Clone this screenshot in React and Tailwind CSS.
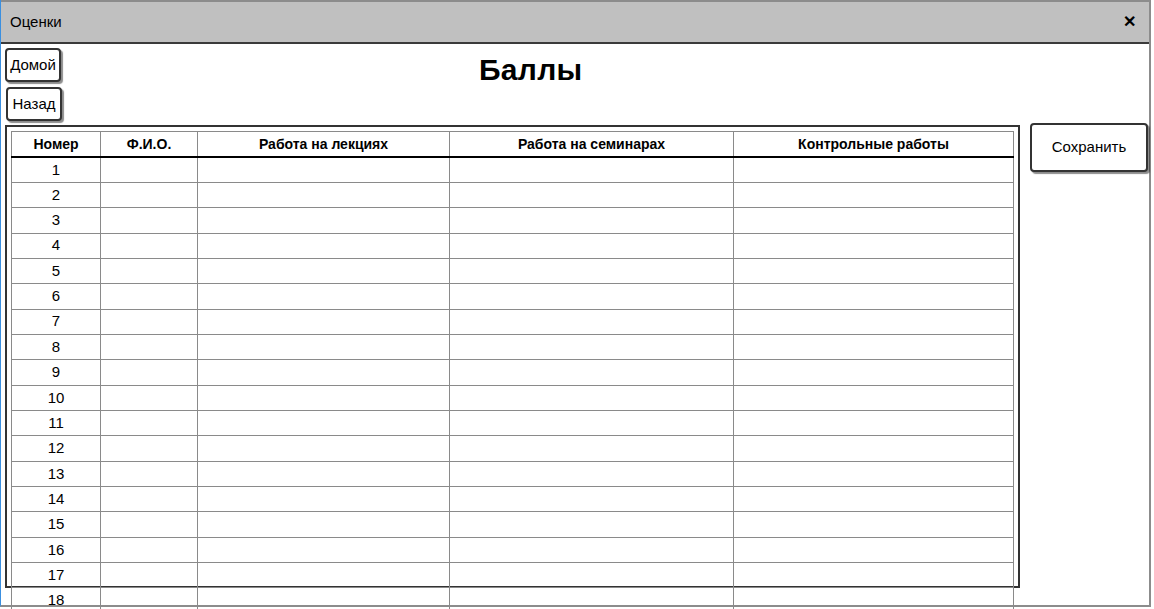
import React from "react";

const columns = [
  { title: "Номер", width: "w-[89px]" },
  { title: "Ф.И.О.", width: "w-[97px]" },
  { title: "Работа на лекциях", width: "w-[252px]" },
  { title: "Работа на семинарах", width: "w-[284px]" },
  { title: "Контрольные работы", width: "w-[280px]" },
];

const rows = Array.from({ length: 18 }, (_, i) => i + 1);

function SketchButton({ children, className = "" }) {
  return (
    <button
      type="button"
      className={
        "border-2 border-[#333] rounded-[4px] bg-white text-black shadow-[2px_2px_1px_rgba(0,0,0,0.45)] flex items-center justify-center " +
        className
      }
    >
      {children}
    </button>
  );
}

export default function App() {
  return (
    <div className="w-[1154px] h-[609px] bg-white overflow-hidden text-black font-['Liberation_Sans',sans-serif]">
      <div className="w-[1151px] h-[607px] border-l border-l-[#3a8fe0] border-r-2 border-b-2 border-r-[#8c8c8c] border-b-[#8c8c8c]">
        {/* title bar */}
        <div className="h-[44px] bg-[#c0c0c0] border-t-2 border-t-[#8c8c8c] border-b-2 border-b-[#3a3a3a] flex items-center justify-between pl-[9px] pr-[13px]">
          <span className="text-[15px]">Оценки</span>
          <span className="text-[16px] font-bold leading-none">✕</span>
        </div>

        <div className="flex pl-[4px]">
          <div className="flex flex-col">
            <div className="flex">
              <div className="flex flex-col pt-[4px]">
                <SketchButton className="w-[56px] h-[34px] text-[15px]">Домой</SketchButton>
                <SketchButton className="w-[56px] h-[34px] text-[15px] mt-[5px] ml-[1px]">Назад</SketchButton>
              </div>
              <h1 className="ml-[417px] mt-[11px] text-[30px] font-bold leading-none tracking-[0.3px]">Баллы</h1>
            </div>

            {/* table frame */}
            <div className="mt-[4px] w-[1015px] h-[463px] border-2 border-[#333] pt-[4px] pl-[4px]">
              <table className="border-collapse table-fixed w-[1003px] border border-[#8a8a8a]">
                <thead>
                  <tr className="h-[25.5px] border-b-2 border-b-black">
                    {columns.map((c) => (
                      <th
                        key={c.title}
                        className={c.width + " border-x border-[#8a8a8a] text-[14px] font-bold text-center p-0"}
                      >
                        {c.title}
                      </th>
                    ))}
                  </tr>
                </thead>
                <tbody>
                  {rows.map((n) => (
                    <tr key={n} className="h-[25.35px] border-b border-[#8a8a8a]">
                      <td className="border-x border-[#8a8a8a] text-center text-[15px] p-0">{n}</td>
                      <td className="border-x border-[#8a8a8a] p-0"></td>
                      <td className="border-x border-[#8a8a8a] p-0"></td>
                      <td className="border-x border-[#8a8a8a] p-0"></td>
                      <td className="border-x border-[#8a8a8a] p-0"></td>
                    </tr>
                  ))}
                </tbody>
              </table>
            </div>
          </div>

          <div className="ml-[10px] pt-[79px]">
            <SketchButton className="w-[118px] h-[49px] text-[15px]">Сохранить</SketchButton>
          </div>
        </div>
      </div>
    </div>
  );
}
